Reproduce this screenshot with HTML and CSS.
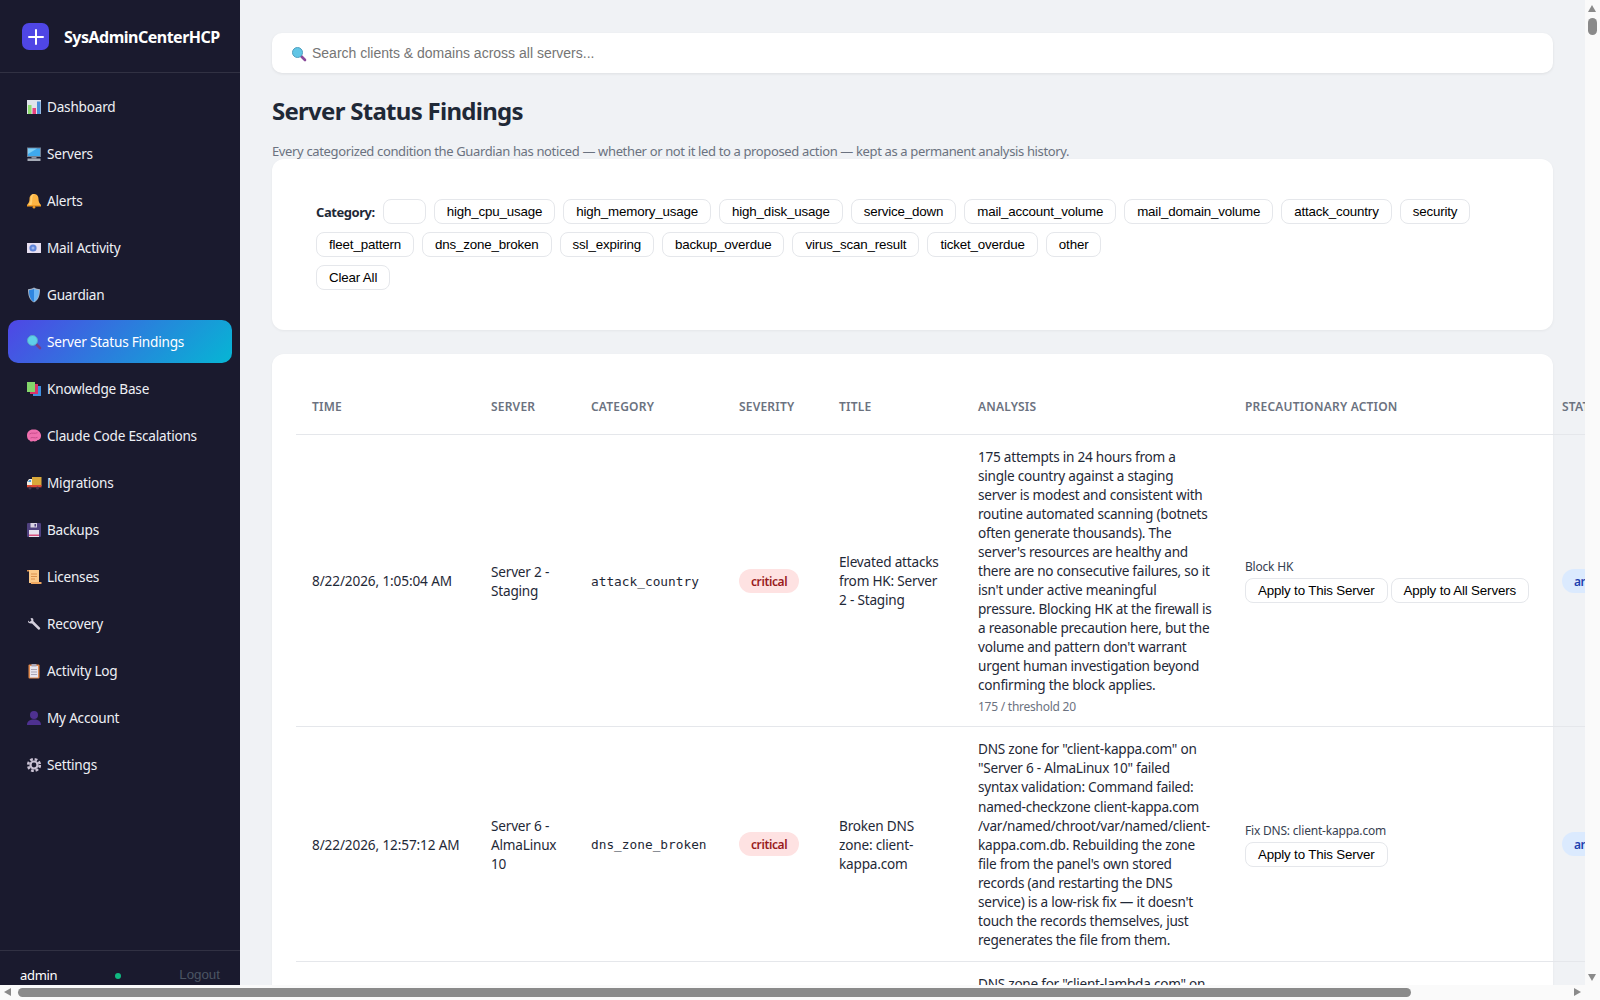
FILE: index.html
```html
<!DOCTYPE html>
<html lang="en">
<head>
<meta charset="UTF-8">
<meta name="viewport" content="width=device-width, initial-scale=1.0">
<title>Server Status Findings</title>
<link rel="stylesheet" href="styles.css">
</head>
<body>
<div class="window">
  <div class="app">
    <aside class="sidebar">
      <div class="brand">
        <div class="brand-icon"><svg width="18" height="18" viewBox="0 0 18 18"><path d="M9 2v14M2 9h14" stroke="#fff" stroke-width="2" stroke-linecap="round"/></svg></div>
        <span class="brand-name">SysAdminCenterHCP</span>
      </div>
      <nav class="nav">
        <a class="nav-item"><svg class="nav-icon" viewBox="0 0 16 16"><rect x="1" y="1" width="14" height="14" fill="#dfe3ea"/><rect x="2" y="6" width="3.5" height="9" fill="#8ddc6e"/><rect x="6.5" y="9" width="3.5" height="6" fill="#e8417f"/><rect x="11" y="2.5" width="3.5" height="12.5" fill="#4a90d9"/></svg>Dashboard</a>
        <a class="nav-item"><svg class="nav-icon" viewBox="0 0 16 16"><rect x="1" y="1.5" width="14" height="9.5" fill="#6f7f93"/><path d="M2 2.5h12v7.5H2z" fill="#3fa9ee"/><path d="M2 2.5h9L2 8z" fill="#7fd0f7"/><rect x="5.5" y="11" width="5" height="1.5" fill="#8e95a3"/><rect x="1.5" y="12.5" width="13" height="2.5" fill="#a5abb7"/></svg>Servers</a>
        <a class="nav-item"><svg class="nav-icon" viewBox="0 0 16 16"><path d="M8 1c3 0 4.5 2.3 4.5 5 0 3 1 4.500 2.500 6H1c1.500-1.500 2.500-3 2.500-6C3.500 3.300 5 1 8 1z" fill="#fdb544"/><path d="M8 1C6 1 4.500 3 4.500 6c0 3-1 4.500-2 6h3c.7-2 .8-4 .8-6S7 2 8 1z" fill="#ffcf70"/><rect x="1" y="12" width="14" height="1.500" fill="#f09a24"/><circle cx="8" cy="14.300" r="1.300" fill="#f09a24"/></svg>Alerts</a>
        <a class="nav-item"><svg class="nav-icon" viewBox="0 0 16 16"><rect x="1" y="3" width="14" height="10" fill="#e7dff0"/><circle cx="7" cy="8" r="3.600" fill="#5f84d8"/><circle cx="7" cy="8" r="1.500" fill="#9db6ec"/></svg>Mail Activity</a>
        <a class="nav-item"><svg class="nav-icon" viewBox="0 0 16 16"><path d="M8 .5c2 1.200 4 1.700 6 1.700 0 6.500-1.500 10.800-6 13.300-4.500-2.500-6-6.800-6-13.300C4 2.200 6 1.700 8 .5z" fill="#a9b4c4"/><path d="M8 1.700c1.700 1 3.300 1.400 5 1.500 0 5.500-1.300 9.400-5 11.600z" fill="#6cb6f5"/><path d="M8 1.700c-1.700 1-3.300 1.400-5 1.500 0 5.500 1.300 9.400 5 11.600z" fill="#2f86e0"/></svg>Guardian</a>
        <a class="nav-item active"><svg class="nav-icon" viewBox="0 0 16 16"><path d="M9.500 9.500l4.500 4.500" stroke="#7b3f86" stroke-width="2.600" stroke-linecap="round"/><circle cx="6.500" cy="6.500" r="5" fill="#5fd0ea" stroke="#57a8c8" stroke-width="1"/></svg>Server Status Findings</a>
        <a class="nav-item"><svg class="nav-icon" viewBox="0 0 16 16"><rect x="7" y="5" width="8" height="10" fill="#3f8fe0"/><rect x="4" y="3" width="8" height="10" fill="#d8336a"/><rect x="1" y="1" width="8" height="10" fill="#83d66a"/></svg>Knowledge Base</a>
        <a class="nav-item"><svg class="nav-icon" viewBox="0 0 16 16"><path d="M1 7.500C1 4 3.500 1.500 7 1.500c3.500-.5 7.500 1.500 8 5.500.4 3-1.500 5-3.500 5-1 1.500-3 1.800-4.500 1-1.500 1-3 .5-3.500-.8C2 12 1 10 1 7.500z" fill="#ef6fae"/><path d="M3.500 6c2.500-2 5 .2 8-1.300M4.500 10c2.500-1.300 4 .7 7-.6" stroke="#c94c8c" stroke-width="1" fill="none"/></svg>Claude Code Escalations</a>
        <a class="nav-item"><svg class="nav-icon" viewBox="0 0 16 16"><rect x="6" y="2" width="9.500" height="9" fill="#d9a83a"/><path d="M1 7l2-3h3v7H1z" fill="#f4f0e6"/><path d="M2 7l1.500-2H5v2z" fill="#3f9be0"/><rect x="1" y="10" width="14.500" height="2.300" fill="#dd4b35"/><circle cx="4" cy="13" r="1.500" fill="#4a3550"/><circle cx="11.500" cy="13" r="1.500" fill="#4a3550"/></svg>Migrations</a>
        <a class="nav-item"><svg class="nav-icon" viewBox="0 0 16 16"><rect x="1" y="1" width="14" height="14" rx="1" fill="#4f417f"/><rect x="4.500" y="1" width="6.500" height="4.500" fill="#d8d3e2"/><rect x="8.500" y="2" width="1.500" height="2.500" fill="#4f417f"/><rect x="3" y="8" width="10" height="7" fill="#e8e2ee"/><rect x="3" y="12.500" width="10" height="1.500" fill="#d8527e"/></svg>Backups</a>
        <a class="nav-item"><svg class="nav-icon" viewBox="0 0 16 16"><path d="M1 1h2.500v1.500H1z" fill="#d98f4c"/><rect x="3" y="1" width="10" height="13" fill="#fbc98a"/><rect x="5" y="13" width="10.500" height="2" fill="#f0a860"/><path d="M5 5h6M5 7.500h6M5 10h4" stroke="#d98f4c" stroke-width="1"/></svg>Licenses</a>
        <a class="nav-item"><svg class="nav-icon" viewBox="0 0 16 16"><path d="M2 4.500L3.500 6 5.500 4.500 4.500 2.500C6 1 8 2.500 7.300 5l6.700 6.700c.8 1-.6 2.600-1.800 1.800L6 7.500C3.500 8 1.500 6.500 2 4.500z" fill="#d4cfdc"/></svg>Recovery</a>
        <a class="nav-item"><svg class="nav-icon" viewBox="0 0 16 16"><rect x="2.500" y="1.500" width="11" height="14" rx="1" fill="#e28b4e"/><rect x="4" y="3" width="8" height="11.500" fill="#e8e6ee"/><rect x="5.500" y="1" width="5" height="2.500" fill="#a9a5b5"/><path d="M5 6.500h6M5 9h6M5 11.500h6" stroke="#a9a5b5" stroke-width="1"/></svg>Activity Log</a>
        <a class="nav-item"><svg class="nav-icon" viewBox="0 0 16 16"><circle cx="8" cy="5" r="4" fill="#4e3190"/><path d="M1 15c0-4 3-5.500 7-5.500s7 1.500 7 5.500z" fill="#4e3190"/></svg>My Account</a>
        <a class="nav-item"><svg class="nav-icon" viewBox="0 0 16 16"><circle cx="8" cy="8" r="5.800" fill="none" stroke="#c9c1d3" stroke-width="2.600" stroke-dasharray="2.700 1.850"/><circle cx="8" cy="8" r="3.500" fill="none" stroke="#c9c1d3" stroke-width="2.200"/></svg>Settings</a>
      </nav>
      <div class="sidebar-foot">
        <span class="user">admin</span>
        <span class="online-dot"></span>
        <span class="logout">Logout</span>
      </div>
    </aside>

    <main class="main">
      <div class="search-box">
        <svg class="search-icon" viewBox="0 0 16 16"><path d="M9.500 9.500l4.500 4.500" stroke="#8a4a9a" stroke-width="2.600" stroke-linecap="round"/><circle cx="6.500" cy="6.500" r="5" fill="#62c6e6" stroke="#4f9fbf" stroke-width="1"/></svg>
        <span class="search-placeholder">Search clients &amp; domains across all servers...</span>
      </div>

      <h1 class="page-title">Server Status Findings</h1>
      <p class="page-sub">Every categorized condition the Guardian has noticed — whether or not it led to a proposed action — kept as a permanent analysis history.</p>

      <section class="card filter-card">
        <div class="chip-row">
          <span class="filter-label">Category:</span>
          <button class="chip chip-empty"></button>
          <button class="chip">high_cpu_usage</button>
          <button class="chip">high_memory_usage</button>
          <button class="chip">high_disk_usage</button>
          <button class="chip">service_down</button>
          <button class="chip">mail_account_volume</button>
          <button class="chip">mail_domain_volume</button>
          <button class="chip">attack_country</button>
          <button class="chip">security</button>
        </div>
        <div class="chip-row">
          <button class="chip">fleet_pattern</button>
          <button class="chip">dns_zone_broken</button>
          <button class="chip">ssl_expiring</button>
          <button class="chip">backup_overdue</button>
          <button class="chip">virus_scan_result</button>
          <button class="chip">ticket_overdue</button>
          <button class="chip">other</button>
        </div>
        <div class="chip-row">
          <button class="chip">Clear All</button>
        </div>
      </section>

      <section class="card table-card">
        <table class="findings">
          <thead>
            <tr>
              <th class="col-time">Time</th>
              <th class="col-server">Server</th>
              <th class="col-category">Category</th>
              <th class="col-severity">Severity</th>
              <th class="col-title">Title</th>
              <th class="col-analysis">Analysis</th>
              <th class="col-action">Precautionary Action</th>
              <th class="col-status">Status</th>
            </tr>
          </thead>
          <tbody>
            <tr>
              <td class="nowrap">8/22/2026, 1:05:04 AM</td>
              <td>Server 2 - Staging</td>
              <td class="mono">attack_country</td>
              <td><span class="badge badge-critical">critical</span></td>
              <td>Elevated attacks from HK: Server 2 - Staging</td>
              <td class="analysis">175 attempts in 24 hours from a single country against a staging server is modest and consistent with routine automated scanning (botnets often generate thousands). The server's resources are healthy and there are no consecutive failures, so it isn't under active meaningful pressure. Blocking HK at the firewall is a reasonable precaution here, but the volume and pattern don't warrant urgent human investigation beyond confirming the block applies.
                <div class="meta">175 / threshold 20</div>
              </td>
              <td>
                <div class="action-label">Block HK</div>
                <div class="action-buttons">
                  <button class="chip">Apply to This Server</button>
                  <button class="chip">Apply to All Servers</button>
                </div>
              </td>
              <td><span class="badge badge-status">analyzed</span></td>
            </tr>
            <tr>
              <td class="nowrap">8/22/2026, 12:57:12 AM</td>
              <td>Server 6 - AlmaLinux 10</td>
              <td class="mono">dns_zone_broken</td>
              <td><span class="badge badge-critical">critical</span></td>
              <td>Broken DNS zone: client-kappa.com</td>
              <td class="analysis">DNS zone for "client-kappa.com" on "Server 6 - AlmaLinux 10" failed syntax validation: Command failed: named-checkzone client-kappa.com /var/named/chroot/var/named/client-kappa.com.db. Rebuilding the zone file from the panel's own stored records (and restarting the DNS service) is a low-risk fix — it doesn't touch the records themselves, just regenerates the file from them.</td>
              <td>
                <div class="action-label">Fix DNS: client-kappa.com</div>
                <div class="action-buttons">
                  <button class="chip">Apply to This Server</button>
                </div>
              </td>
              <td><span class="badge badge-status">analyzed</span></td>
            </tr>
            <tr>
              <td class="nowrap">8/22/2026, 12:57:10 AM</td>
              <td>Server 6 - AlmaLinux 10</td>
              <td class="mono">dns_zone_broken</td>
              <td><span class="badge badge-critical">critical</span></td>
              <td>Broken DNS zone: client-lambda.com</td>
              <td class="analysis">DNS zone for "client-lambda.com" on "Server 6 - AlmaLinux 10" failed syntax validation: Command failed: named-checkzone client-lambda.com /var/named/chroot/var/named/client-lambda.com.db. Rebuilding the zone file from the panel's own stored records (and restarting the DNS service) is a low-risk fix — it doesn't touch the records themselves, just regenerates the file from them.</td>
              <td>
                <div class="action-label">Fix DNS: client-lambda.com</div>
                <div class="action-buttons">
                  <button class="chip">Apply to This Server</button>
                </div>
              </td>
              <td><span class="badge badge-status">analyzed</span></td>
            </tr>
          </tbody>
        </table>
      </section>
    </main>
  </div>

  <div class="scrollbar-v">
    <span class="arrow arrow-up"></span>
    <span class="thumb-v"></span>
    <span class="arrow arrow-down"></span>
  </div>
  <div class="scrollbar-h">
    <span class="arrow arrow-left"></span>
    <span class="thumb-h"></span>
    <span class="arrow arrow-right"></span>
  </div>
  <div class="scrollbar-corner"></div>
</div>
</body>
</html>
```

FILE: styles.css
```css
* {
  box-sizing: border-box;
}

body {
  margin: 0;
  overflow: hidden;
  font-family: "Noto Sans", "Open Sans", sans-serif;
  font-size: 13.6px;
  line-height: 1.4;
  color: #1f2937;
  background-color: #f0f2f5;
}

.window {
  display: grid;
  grid-template-columns: 1fr 15px;
  grid-template-rows: 1fr 15px;
  height: 100vh;
}

.app {
  display: flex;
  min-width: 0;
  min-height: 0;
  overflow: hidden;
}

/* sidebar */
.sidebar {
  flex: 0 0 240px;
  display: flex;
  flex-direction: column;
  background-color: #1a1a2e;
  color: #e6e8ee;
}

.brand {
  display: flex;
  align-items: center;
  gap: 14px;
  height: 73px;
  padding: 1px 0 0 22px;
  border-bottom: 1px solid rgba(255, 255, 255, 0.1);
}

.brand-icon {
  display: flex;
  align-items: center;
  justify-content: center;
  width: 27px;
  height: 27px;
  border-radius: 7px;
  background-color: #4f46e5;
}

.brand-name {
  margin: 2px 0 0 1px;
  font-size: 16px;
  font-weight: 700;
  color: #fff;
  letter-spacing: -0.5px;
}

.nav {
  flex: 1;
  padding: 12px 8px 0;
}

.nav-item {
  display: flex;
  align-items: center;
  gap: 5px;
  height: 43px;
  margin-bottom: 4px;
  padding-left: 18px;
  border-radius: 10px;
  font-size: 13.6px;
  letter-spacing: -0.22px;
  color: #eef0f5;
}

.nav-item.active {
  background: linear-gradient(135deg, #4f46e5, #06b6d4);
  color: #fff;
}

.nav-icon {
  flex: 0 0 16px;
  width: 16px;
  height: 16px;
}

.sidebar-foot {
  display: flex;
  justify-content: space-between;
  align-items: center;
  height: 35px;
  padding: 15px 20px 0;
  border-top: 1px solid rgba(255, 255, 255, 0.1);
  overflow: hidden;
}

.user {
  font-size: 13px;
  letter-spacing: -0.3px;
  color: #fff;
}

.online-dot {
  width: 6px;
  height: 6px;
  border-radius: 50%;
  background-color: #10b981;
}

.logout {
  font-family: "Liberation Sans", Arial, sans-serif;
  font-size: 13.33px;
  color: #4b5563;
}

/* main column */
.main {
  flex: 1;
  min-width: 0;
  padding: 33px 32px 0;
}

.search-box {
  display: flex;
  align-items: center;
  gap: 5px;
  height: 40px;
  padding: 1px 0 0 19px;
  background-color: #fff;
  border-radius: 10px;
  box-shadow: 0 1px 3px rgba(0, 0, 0, 0.08);
}

.search-icon {
  width: 16px;
  height: 16px;
}

.search-placeholder {
  font-family: "Liberation Sans", Arial, sans-serif;
  font-size: 14px;
  color: #757575;
}

.page-title {
  margin: 22px 0 0;
  font-size: 24px;
  line-height: 32px;
  font-weight: 700;
  letter-spacing: -0.72px;
  color: #1f2937;
}

.page-sub {
  margin: 17px 0 0;
  font-size: 13px;
  line-height: 15px;
  letter-spacing: -0.36px;
  color: #6b7280;
}

.card {
  background-color: #fff;
  border-radius: 12px;
  box-shadow: 0 1px 3px rgba(0, 0, 0, 0.05);
}

.filter-card {
  display: flex;
  flex-direction: column;
  gap: 8px;
  height: 171px;
  padding: 40px 44px;
}

.chip-row {
  display: flex;
  align-items: center;
  gap: 8px;
}

.filter-label {
  padding-top: 1px;
  font-size: 13px;
  font-weight: 700;
  letter-spacing: -0.45px;
}

.chip {
  flex: none;
  height: 25px;
  padding: 0 12px;
  font-family: "Liberation Sans", Arial, sans-serif;
  font-size: 13.33px;
  letter-spacing: -0.16px;
  white-space: nowrap;
  color: #000;
  background-color: #fff;
  border: 1px solid #e5e7eb;
  border-radius: 8px;
}

.chip-empty {
  width: 43px;
}

/* findings table, wider than its card */
.table-card {
  margin-top: 24px;
  padding: 24px;
  height: 900px;
}

.findings {
  width: 1490px;
  table-layout: fixed;
  border-collapse: collapse;
}

.findings th {
  padding: 21px 16px 20px;
  font-size: 12px;
  line-height: 15px;
  font-weight: 600;
  text-align: left;
  text-transform: uppercase;
  letter-spacing: 0.2px;
  color: #6b7280;
  border-bottom: 1px solid #e5e7eb;
  white-space: nowrap;
}

.findings td {
  padding: 12px 16px;
  vertical-align: middle;
  border-bottom: 1px solid #e5e7eb;
  letter-spacing: -0.2px;
  color: #1f2937;
}

.col-time { width: 179px; }
.col-server { width: 100px; }
.col-category { width: 148px; }
.col-severity { width: 100px; }
.col-title { width: 139px; }
.col-analysis { width: 267px; }
.col-action { width: 317px; }
.col-status { width: 240px; }

.findings td.nowrap {
  white-space: nowrap;
  letter-spacing: -0.12px;
}

.findings td.mono {
  padding-top: 14px;
  font-family: "DejaVu Sans Mono", monospace;
  font-size: 12.8px;
  letter-spacing: 0;
}

.findings td.analysis {
  letter-spacing: -0.25px;
}

.badge {
  display: block;
  width: fit-content;
  height: 24px;
  padding: 0 12px;
  border-radius: 12px;
  font-size: 12px;
  line-height: 26px;
  font-weight: 600;
  letter-spacing: -0.4px;
}

.badge-critical {
  background-color: #fee2e2;
  color: #991b1b;
}

.badge-status {
  background-color: #dbeafe;
  color: #1e40af;
}

.meta {
  margin: 3px 0 -3px;
  font-size: 12px;
  line-height: 20px;
  color: #6b7280;
}

.action-label {
  margin-bottom: 2px;
  font-size: 12px;
  line-height: 18px;
  color: #374151;
}

.action-buttons {
  display: flex;
  gap: 3px;
}

/* scrollbars */
.scrollbar-v {
  position: relative;
  background-color: #fafafa;
}

.scrollbar-h {
  position: relative;
  background-color: #fafafa;
}

.scrollbar-corner {
  background-color: #fafafa;
}

.thumb-v {
  position: absolute;
  left: 3px;
  top: 18px;
  width: 9px;
  height: 17px;
  border-radius: 5px;
  background-color: #8a8a8a;
}

.thumb-h {
  position: absolute;
  left: 18px;
  top: 3px;
  width: 1393px;
  height: 9px;
  border-radius: 5px;
  background-color: #8a8a8a;
}

.arrow {
  position: absolute;
  width: 0;
  height: 0;
  border-style: solid;
  border-color: transparent;
}

.arrow-up {
  left: 3px;
  top: 5px;
  border-width: 0 4.5px 7px;
  border-bottom-color: #8a8a8a;
}

.arrow-down {
  left: 3px;
  bottom: 4px;
  border-width: 7px 4.5px 0;
  border-top-color: #8a8a8a;
}

.arrow-left {
  left: 4px;
  top: 3px;
  border-width: 4.5px 7px 4.5px 0;
  border-right-color: #8a8a8a;
}

.arrow-right {
  right: 4px;
  top: 3px;
  border-width: 4.5px 0 4.5px 7px;
  border-left-color: #8a8a8a;
}
```
